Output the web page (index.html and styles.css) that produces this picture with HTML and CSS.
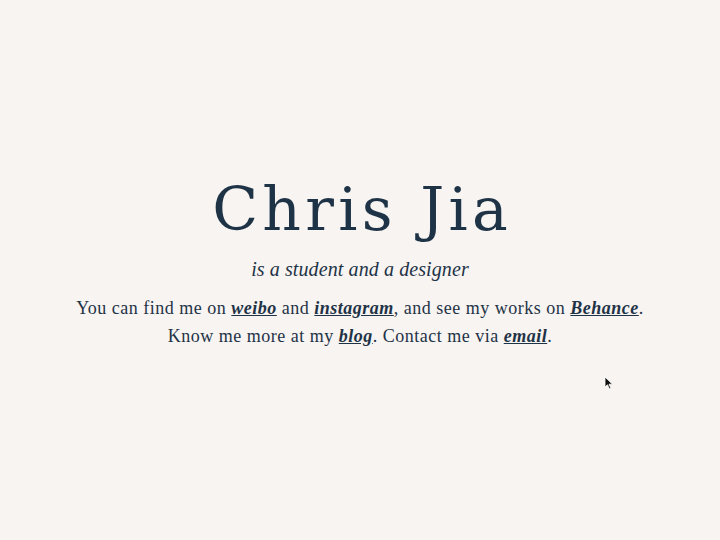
FILE: index.html
```html
<!DOCTYPE html>
<html>
<head>
<meta charset="utf-8">
<link rel="stylesheet" href="styles.css">
</head>
<body>
<main class="page">
  <h1 class="name">Chris Jia</h1>
  <p class="tagline">is a student and a designer</p>
  <p class="intro">You can find me on <a href="#">weibo</a> and <a href="#">instagram</a>, and see my works on <a href="#">Behance</a>.<br>Know me more at my <a href="#">blog</a>. Contact me via <a href="#">email</a>.</p>
</main>
<svg class="cursor" width="10" height="14" viewBox="0 0 10 14"><path d="M1 1 L1 11 L3.5 8.8 L5.5 13 L7 12.3 L5 8.2 L8.5 8.2 Z" fill="#111" stroke="#fff" stroke-width="0.8"/></svg>
</body>
</html>
```
FILE: styles.css
```css
html, body {
  margin: 0;
  padding: 0;
  background: #f7f4f1;
  color: #1f3347;
  height: 100%;
}
.page {
  display: flex;
  flex-direction: column;
  align-items: center;
  padding-top: 171px;
  text-align: center;
}
.name {
  margin: 0;
  font-family: "DejaVu Serif", serif;
  font-weight: normal;
  font-size: 60px;
  line-height: 76px;
  letter-spacing: 4.3px;
  padding-left: 4.3px;
}
.tagline {
  margin: 10px 0 0;
  font-family: "Liberation Serif", serif;
  font-style: italic;
  font-size: 20px;
  line-height: 24px;
  letter-spacing: 0.1px;
}
.intro {
  margin: 13px 0 0;
  font-family: "Liberation Serif", serif;
  font-size: 18px;
  line-height: 28px;
  letter-spacing: 0.5px;
}
.intro a {
  color: #1f3347;
  font-style: italic;
  font-weight: bold;
  text-decoration: underline;
}
.cursor {
  position: absolute;
  left: 604px;
  top: 376px;
}
```
